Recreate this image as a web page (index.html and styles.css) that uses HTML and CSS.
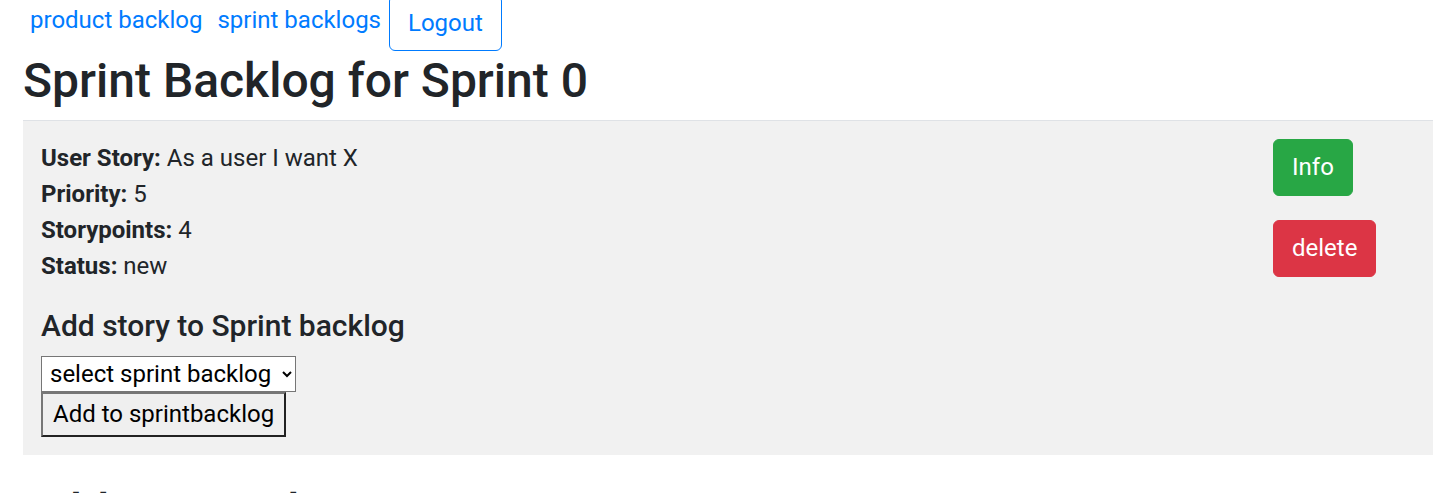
FILE: index.html
```html
<!DOCTYPE html>
<html lang="en">
<head>
<meta charset="utf-8">
<title>Sprint Backlog</title>
<link rel="stylesheet" href="styles.css">
</head>
<body>
<div class="page">
  <nav class="nav">
    <a class="nav-link" href="#">product backlog</a>
    <a class="nav-link" href="#">sprint backlogs</a>
    <button class="btn btn-outline" type="button">Logout</button>
  </nav>
  <h2 class="title">Sprint Backlog for Sprint 0</h2>
  <div class="story">
    <div class="story-main">
      <p class="fields">
        <b>User Story:</b> As a user I want X<br>
        <b>Priority:</b> 5<br>
        <b>Storypoints:</b> 4<br>
        <b>Status:</b> new
      </p>
      <h5 class="sub">Add story to Sprint backlog</h5>
      <form class="add-form">
        <select class="sel">
          <option>select sprint backlog</option>
        </select>
        <button class="plain-btn" type="button">Add to sprintbacklog</button>
      </form>
    </div>
    <div class="story-actions">
      <button class="btn btn-success" type="button">Info</button>
      <button class="btn btn-danger" type="button">delete</button>
    </div>
  </div>
  <h2 class="title next">Add new task</h2>
</div>
</body>
</html>
```

FILE: styles.css
```css
html, body {
  margin: 0;
  padding: 0;
  background: #fff;
}
body {
  font-family: Roboto, "Liberation Sans", Arial, sans-serif;
  font-size: 24px;
  line-height: 1.5;
  color: #212529;
  overflow: hidden;
}
.page {
  padding-left: 23px;
}
.nav {
  display: flex;
  align-items: flex-start;
  margin: -5px 0 1px -1px;
}
.nav-link {
  color: #007bff;
  text-decoration: none;
  padding: 7px 7px 0 8px;
  line-height: 36px;
  white-space: nowrap;
}
.btn {
  font-family: inherit;
  font-size: 24px;
  line-height: 36px;
  padding: 9px 18px;
  border: 1px solid transparent;
  border-radius: 6px;
  background: transparent;
  cursor: pointer;
  display: inline-block;
  white-space: nowrap;
}
.btn-outline {
  color: #007bff;
  border-color: #007bff;
  margin-left: 1px;
}
.btn-success {
  color: #fff;
  background: #28a745;
  border-color: #28a745;
  line-height: 37px;
}
.btn-danger {
  color: #fff;
  background: #dc3545;
  border-color: #dc3545;
  line-height: 37px;
}
.title {
  font-size: 48px;
  font-weight: 500;
  line-height: 1.2;
  margin: 0 0 10px;
}
.title.next {
  margin-top: 28px;
}
.story {
  display: grid;
  grid-template-columns: 1fr 142px;
  background: #f1f1f1;
  border-top: 1px solid #dfe2e6;
  padding: 18px;
}
.story-main {
  padding-top: 1px;
}
.fields {
  margin: 0 0 24px;
}
.sub {
  font-size: 30px;
  font-weight: 500;
  line-height: 36px;
  margin: 0 0 12px;
}
.add-form {
  display: flex;
  flex-direction: column;
  align-items: flex-start;
}
.sel {
  font-family: inherit;
  font-size: 24px;
  height: 36px;
  width: 255px;
  padding: 0 2px 0 4px;
  border: 1px solid #767676;
  border-radius: 0;
  background: #fff;
  color: #000;
}
.plain-btn {
  font-family: inherit;
  font-size: 24px;
  line-height: 29px;
  padding: 6px 10px;
  background: #efefef;
  color: #000;
  border-width: 2px;
  border-style: solid;
  border-color: #767676 #222 #222 #767676;
  border-radius: 0;
  white-space: nowrap;
}
.story-actions {
  display: flex;
  flex-direction: column;
  align-items: flex-start;
  gap: 24px;
}
```
